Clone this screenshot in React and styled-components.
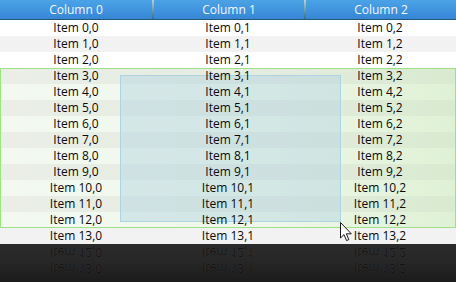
import styled, { createGlobalStyle } from "styled-components";

const GlobalStyle = createGlobalStyle`
  html, body {
    margin: 0;
    padding: 0;
    background: #1f1f1f;
  }
  body {
    font-family: "Open Sans", "Noto Sans", sans-serif;
  }
`;

const Screen = styled.div`
  position: relative;
  width: 456px;
  height: 282px;
  overflow: hidden;
  background: #ffffff;
  display: flex;
  flex-direction: column;
`;

const Header = styled.div`
  display: grid;
  grid-template-columns: repeat(3, 1fr);
  height: 20px;
  background: linear-gradient(#4ba3e6, #3d8fdb 70%, #3786d2);
  border-bottom: 1px solid #22597a;
  box-sizing: border-box;
`;

const HeaderCell = styled.div`
  display: flex;
  align-items: center;
  justify-content: center;
  color: #f4f8ff;
  font-size: 12px;
  line-height: 19px;
  border-left: ${(p) => (p.first ? "none" : "2px solid transparent")};
  border-image: ${(p) =>
    p.first ? "none" : "linear-gradient(#bcd9d6, #5f96a8 60%, #2c6a8a) 1"};
`;

const Body = styled.div`
  display: flex;
  flex-direction: column;
`;

const Row = styled.div`
  display: grid;
  grid-template-columns: repeat(3, 1fr);
  height: 16px;
  background: ${(p) => (p.odd ? "#f2f2f2" : "#ffffff")};
`;

const SelectedRow = styled(Row)`
  background: ${(p) =>
    p.odd
      ? "linear-gradient(90deg, #eaeee7, #e4ecdf 60%, #d9ead0)"
      : "linear-gradient(90deg, #f3f9f0, #eef7e9 60%, #def1d5)"};
`;

const Cell = styled.div`
  position: relative;
  z-index: 1;
  text-align: center;
  font-size: 12px;
  line-height: 16px;
  color: #0a0a0a;
  white-space: nowrap;
`;

const Selection = styled.div`
  position: relative;
  display: flex;
  flex-direction: column;

  &::after {
    content: "";
    position: absolute;
    inset: 0;
    border: 1px solid #9edf88;
    pointer-events: none;
  }
`;

const Reflection = styled.div`
  position: relative;
  flex: 1;
  overflow: hidden;
  background: linear-gradient(#2b2b2b, #272727 45%, #1b1b1b);
`;

const Mirrored = styled.div`
  display: flex;
  flex-direction: column-reverse;
  transform: scaleY(-1);
  transform-origin: top;
  position: relative;
  top: 32px;
  opacity: 0.7;
`;

const GhostRow = styled.div`
  display: grid;
  grid-template-columns: repeat(3, 1fr);
  height: 16px;
`;

const GhostCell = styled(Cell)`
  color: #0d0d0d;
  text-shadow: 0 0 1px #4a4a4a;
`;

const DragBox = styled.div`
  position: absolute;
  z-index: 0;
  left: 120px;
  top: 75px;
  width: 221px;
  height: 147px;
  box-sizing: border-box;
  border: 1px solid #acd4e2;
  background: rgba(178, 210, 224, 0.45);
  pointer-events: none;
`;

const CursorWrap = styled.div`
  position: absolute;
  z-index: 2;
  left: ${(p) => p.x}px;
  top: ${(p) => p.y}px;
  width: 13px;
  height: 20px;
  transform: ${(p) => (p.flip ? "scaleY(-1)" : "none")};
  opacity: ${(p) => (p.flip ? 0.25 : 1)};
`;

const Cursor = ({ x, y, flip }) => (
  <CursorWrap x={x} y={y} flip={flip}>
    <svg width="13" height="20" viewBox="0 0 13 20">
      <path
        d="M0.5 0.5 L0.5 16 L4 12.6 L6.6 18.6 L8.8 17.6 L6.3 11.8 L11.3 11.8 Z"
        fill="#ffffff"
        stroke="#1a1a1a"
        strokeWidth="1"
        strokeLinejoin="miter"
      />
    </svg>
  </CursorWrap>
);

const cols = [0, 1, 2];
const rowsAbove = [0, 1, 2];
const rowsSelected = [3, 4, 5, 6, 7, 8, 9, 10, 11, 12];
const ghostRows = [12, 13];

const Cells = ({ r, as: C = Cell }) =>
  cols.map((c) => <C key={c}>{`Item ${r},${c}`}</C>);

export default function App() {
  return (
    <>
      <GlobalStyle />
      <Screen>
        <Header>
          {cols.map((c) => (
            <HeaderCell key={c} first={c === 0}>
              Column {c}
            </HeaderCell>
          ))}
        </Header>
        <Body>
          {rowsAbove.map((r) => (
            <Row key={r} odd={r % 2 === 1}>
              <Cells r={r} />
            </Row>
          ))}
          <Selection>
            {rowsSelected.map((r) => (
              <SelectedRow key={r} odd={r % 2 === 1}>
                <Cells r={r} />
              </SelectedRow>
            ))}
          </Selection>
          <Row odd>
            <Cells r={13} />
          </Row>
        </Body>
        <Reflection>
          <Mirrored>
            {ghostRows.map((r) => (
              <GhostRow key={r}>
                <Cells r={r} as={GhostCell} />
              </GhostRow>
            ))}
          </Mirrored>
          <Cursor x={340} y={-18} flip />
        </Reflection>
        <DragBox />
        <Cursor x={340} y={222} />
      </Screen>
    </>
  );
}
